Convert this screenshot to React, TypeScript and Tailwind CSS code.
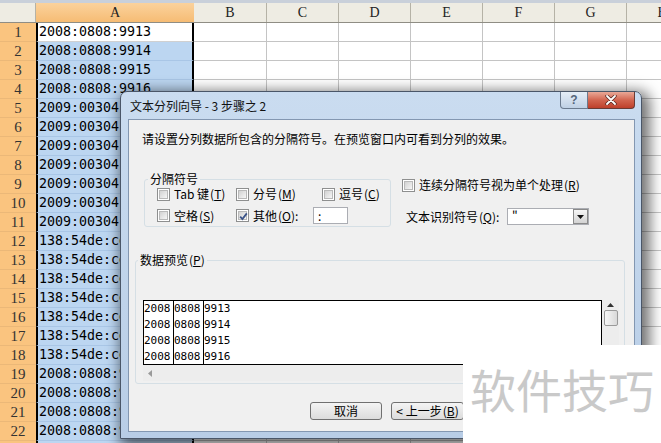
import React from 'react';

const COLS = ['B', 'C', 'D', 'E', 'F', 'G', 'H'];

const ROWS: string[] = [
  '2008:0808:9913',
  '2008:0808:9914',
  '2008:0808:9915',
  '2008:0808:9916',
  ...Array(7).fill('2009:00304:8a2f'),
  ...Array(7).fill('138:54de:ce0b:11'),
  '2008:0808:9001',
  '2008:0808:9002',
  '2008:0808:9003',
  '2008:0808:9004',
  '',
];

const PREVIEW = [
  ['2008', '0808', '9913'],
  ['2008', '0808', '9914'],
  ['2008', '0808', '9915'],
  ['2008', '0808', '9916'],
];

const cjk = "font-['Noto_Sans_CJK_SC',sans-serif]";

function Box({ checked }: { checked?: boolean }) {
  return (
    <span className="relative flex h-[13px] w-[13px] shrink-0 items-center justify-center border border-[#8E8F8F] bg-white">
      <span className="h-[9px] w-[9px] border border-[#B9B9B9] bg-gradient-to-br from-[#D2D2D2] to-[#F6F6F6]" />
      {checked && (
        <svg className="absolute left-[1px] top-[1px]" width="11" height="11" viewBox="0 0 11 11">
          <path d="M2.2 5.6 L4.4 8 L8.8 2.4" fill="none" stroke="#3C5488" strokeWidth="1.8" />
        </svg>
      )}
    </span>
  );
}

function Key({ k }: { k: string }) {
  return (
    <span className="ml-[1px]">
      (<span className="underline underline-offset-1">{k}</span>)
    </span>
  );
}

function Check({ label, k, checked, w }: { label: string; k: string; checked?: boolean; w: string }) {
  return (
    <div className={`flex items-center gap-[4px] ${w}`}>
      <Box checked={checked} />
      <span className="whitespace-nowrap">
        {label}
        <Key k={k} />
      </span>
    </div>
  );
}

function Sheet() {
  return (
    <div className="flex flex-col">
      <div className="h-[3px] bg-[#C9D0DA]" />
      <div className="flex h-[20px] border-b border-[#8F8D84] bg-[#EEECE3] font-['Liberation_Serif',serif] text-[14px] text-[#222]">
        <div className="w-[36px] shrink-0 border-r border-[#B5B2A6]" />
        <div className="flex w-[158px] shrink-0 items-center justify-center bg-gradient-to-b from-[#FBD29C] to-[#F6BC74]">A</div>
        {COLS.map((c, i) => (
          <div
            key={c}
            className={`flex shrink-0 items-center justify-center border-r border-[#B5B2A6] ${i === 0 ? 'w-[73px]' : 'w-[72px]'}`}
          >
            {c}
          </div>
        ))}
      </div>
      {ROWS.map((v, i) => (
        <div key={i} className="flex h-[19px]">
          <div className="flex w-[36px] shrink-0 items-center justify-center border-b border-[#EBB878] bg-[#FAC47F] font-['Liberation_Serif',serif] text-[15px] text-[#333]">
            {i + 1}
          </div>
          <div
            className={`flex w-[158px] shrink-0 items-center overflow-hidden whitespace-nowrap border-x-2 border-x-black pl-[1px] font-['DejaVu_Sans_Mono',monospace] text-[13.3px] text-black ${
              i === 0 ? 'border-b border-b-[#D0D0D0] bg-white' : 'border-b border-b-[#A9C6E6] bg-[#BCD6F1]'
            }`}
          >
            {v}
          </div>
          {COLS.map((c, j) => (
            <div
              key={c}
              className={`shrink-0 border-b border-r border-[#C4C4C4] bg-white ${j === 0 ? 'w-[73px]' : 'w-[72px]'}`}
            />
          ))}
        </div>
      ))}
    </div>
  );
}

function Dialog() {
  return (
    <div
      className={`absolute left-[120px] top-[91px] flex h-[348px] w-[522px] flex-col rounded-t-[7px] border border-[#4A5668] bg-gradient-to-b from-[#CADCF0] to-[#B8CDE6] shadow-[4px_4px_14px_4px_rgba(0,0,0,0.55)] ${cjk} text-[12px] text-black`}
    >
      <div className="relative flex h-[27px] shrink-0 items-center pl-[9px] text-[12px] text-[#111]">
        文本分列向导 - 3 步骤之 2
        <div className="absolute right-[6px] top-0 flex">
          <div className="flex h-[17px] w-[28px] items-center justify-center rounded-bl-[4px] border border-t-0 border-[#6B7A8E] bg-gradient-to-b from-[#E6EEF7] to-[#BFD0E4] font-['Liberation_Sans',sans-serif] text-[12px] font-bold text-[#55657A]">
            ?
          </div>
          <div className="flex h-[17px] w-[47px] items-center justify-center rounded-br-[4px] border border-l-0 border-t-0 border-[#6A3B35] bg-gradient-to-b from-[#E9A897] via-[#D26550] to-[#BE3F2B]">
            <svg width="12" height="10" viewBox="0 0 12 10">
              <path d="M2 1 L10 9 M10 1 L2 9" stroke="#5A2A22" strokeWidth="3.4" strokeLinecap="round" />
              <path d="M2 1 L10 9 M10 1 L2 9" stroke="#FFFFFF" strokeWidth="1.8" strokeLinecap="round" />
            </svg>
          </div>
        </div>
      </div>

      <div className="ml-[7px] mr-[6px] flex h-[313px] flex-col border border-[#8397B1] bg-[#F0F0F0]">
        <p className="pl-[13px] pt-[11px] leading-[16px]">请设置分列数据所包含的分隔符号。在预览窗口内可看到分列的效果。</p>

        <div className="mt-[25px] flex items-start">
          <fieldset className="ml-[15px] w-[247px] rounded-[3px] border border-[#D5DFE5] pb-[2px]">
            <legend className="ml-[3px] px-[2px] leading-[14px]">分隔符号</legend>
            <div className="flex h-[16px] items-center pl-[12px]">
              <Check label="Tab 键" k="T" w="w-[79px]" />
              <Check label="分号" k="M" w="w-[86px]" />
              <Check label="逗号" k="C" w="w-[60px]" />
            </div>
            <div className="mt-[5px] flex h-[17px] items-center pl-[12px]">
              <Check label="空格" k="S" w="w-[79px]" />
              <div className="flex w-[77px] items-center gap-[4px]">
                <Box checked />
                <span className="whitespace-nowrap">
                  其他
                  <Key k="O" />:
                </span>
              </div>
              <div className="flex h-[17px] w-[35px] items-center border border-[#ABADB3] bg-white pl-[4px] leading-none">:</div>
            </div>
          </fieldset>

          <div className="ml-[11px] flex flex-col">
            <div className="mt-[6px] flex h-[14px] items-center gap-[4px]">
              <Box />
              <span className="whitespace-nowrap">
                连续分隔符号视为单个处理
                <Key k="R" />
              </span>
            </div>
            <div className="mt-[16px] flex h-[17px] items-center">
              <span className="w-[105px] whitespace-nowrap pl-[4px]">
                文本识别符号
                <Key k="Q" />:
              </span>
              <div className="flex h-[17px] w-[82px] border border-[#ABADB3] bg-white">
                <span className="flex-1 pl-[4px] leading-[12px]">"</span>
                <div className="flex w-[15px] items-center justify-center border border-[#8A8A8A] bg-gradient-to-b from-[#F6F6F6] to-[#D3D3D3]">
                  <svg width="7" height="4" viewBox="0 0 7 4">
                    <path d="M0 0 H7 L3.5 4 Z" fill="#111" />
                  </svg>
                </div>
              </div>
            </div>
          </div>
        </div>

        <fieldset className="ml-[6px] mt-[26px] w-[490px] rounded-[3px] border border-[#D5DFE5] pb-[2px]">
          <legend className="ml-[2px] px-[2px] leading-[14px]">
            数据预览
            <Key k="P" />
          </legend>
          <div className="ml-[7px] mt-[33px] flex w-[476px] flex-col">
            <div className="flex h-[65px]">
              <div className="flex w-[459px] overflow-hidden border border-black bg-white font-['DejaVu_Sans_Mono',monospace] text-[11px] text-black">
                {[0, 1, 2].map((c) => (
                  <div
                    key={c}
                    className={`flex flex-col ${c < 2 ? 'w-[30px] border-r border-black' : 'flex-1'}`}
                  >
                    {PREVIEW.map((r, i) => (
                      <div key={i} className="flex h-[16px] items-center">
                        {r[c]}
                      </div>
                    ))}
                  </div>
                ))}
              </div>
              <div className="flex w-[17px] flex-col items-center bg-[#EDEDED]">
                <svg className="mt-[3px]" width="7" height="4" viewBox="0 0 7 4">
                  <path d="M0 4 H7 L3.5 0 Z" fill="#333" />
                </svg>
                <div className="mt-[3px] h-[16px] w-[14px] rounded-[2px] border border-[#9A9A9A] bg-gradient-to-r from-[#F7F7F7] to-[#D9D9D9]" />
              </div>
            </div>
            <div className="flex h-[16px] w-[459px] items-center bg-[#EDEDED] pl-[5px]">
              <svg width="4" height="7" viewBox="0 0 4 7">
                <path d="M4 0 V7 L0 3.5 Z" fill="#9A9A9A" />
              </svg>
            </div>
          </div>
        </fieldset>

        <div className="mt-[18px] flex gap-[9px] pl-[181px]">
          <button className="h-[18px] w-[72px] rounded-[3px] border border-[#707070] bg-gradient-to-b from-[#F4F4F4] to-[#DCDCDC] leading-none">
            取消
          </button>
          <button className="h-[18px] w-[73px] whitespace-nowrap rounded-[3px] border border-[#707070] bg-gradient-to-b from-[#F4F4F4] to-[#DCDCDC] leading-none">
            &lt; 上一步
            <Key k="B" />
          </button>
        </div>
      </div>
    </div>
  );
}

export default function App() {
  return (
    <div className="relative h-[443px] w-[661px] overflow-hidden bg-white">
      <Sheet />
      <Dialog />
      <div className={`absolute bottom-0 left-[463px] right-0 top-[345px] bg-white pl-[7px] pt-[20px] ${cjk} text-[46px] leading-[46px] text-[#C9C9C9]`}>
        软件技巧
      </div>
    </div>
  );
}
